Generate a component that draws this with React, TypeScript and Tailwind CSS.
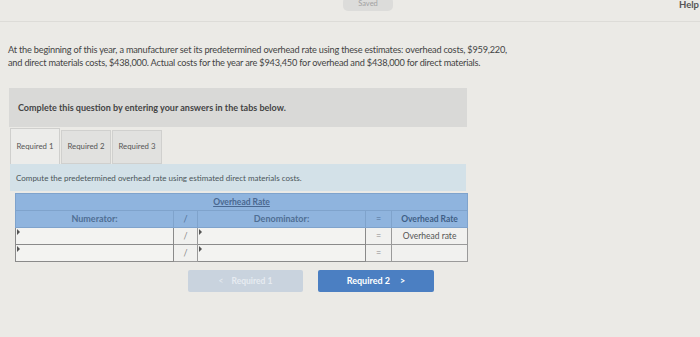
import React from 'react';

const InputCell: React.FC<{ className?: string }> = ({ className = '' }) => (
  <td className={`relative border border-[#8a8a8a] bg-[#f3f3f1] ${className}`}>
    <span className="absolute left-[1px] top-[1px] w-0 h-0 border-t-[3px] border-b-[3px] border-l-[3px] border-t-transparent border-b-transparent border-l-[#555]" />
  </td>
);

const SymCell: React.FC<{ children: React.ReactNode }> = ({ children }) => (
  <td className="border border-[#9a9a9a] bg-[#f1f1ef] text-center text-[9px] text-[#888]">{children}</td>
);

const Tab: React.FC<{ label: string; active?: boolean }> = ({ label, active }) => (
  <div
    className={
      active
        ? 'w-[50px] h-[36px] bg-[#ececea] border border-b-0 border-[#cfcfcd] flex items-center justify-center text-[7.8px] text-[#555]'
        : 'ml-[1px] w-[50px] h-[34px] bg-[#e1e1df] border border-[#d0d0ce] flex items-center justify-center text-[7.8px] text-[#555]'
    }
  >
    {label}
  </div>
);

export default function App() {
  return (
    <div className="w-[700px] h-[337px] overflow-hidden bg-[#ebeae6] font-['Lato','Liberation_Sans',sans-serif] text-[#3f3f3f]">
      <div className="relative h-[22px] border-b border-[#dddcd8]">
        <div className="absolute left-[343px] top-[-3px] w-[50px] h-[14px] rounded-[5px] bg-[#dcdcda] flex items-center justify-center text-[7.5px] leading-none text-[#a2a2a2]">Saved</div>
        <div className="absolute right-[1px] top-[0px] text-[9.5px] leading-none font-bold text-[#555]">Help</div>
      </div>

      <p className="px-[8px] pt-[21px] text-[9.2px] leading-[13px] tracking-[-0.2px] text-[#444]">
        At the beginning of this year, a manufacturer set its predetermined overhead rate using these estimates: overhead costs, $959,220,
        <br />
        and direct materials costs, $438,000. Actual costs for the year are $943,450 for overhead and $438,000 for direct materials.
      </p>

      <div className="ml-[9px] mt-[19px] w-[458px] h-[39px] bg-[#d9d9d7] flex items-center pl-[9px] text-[9px] font-bold text-[#444]">
        Complete this question by entering your answers in the tabs below.
      </div>

      <div className="ml-[10px] mt-[1px] flex items-end h-[36px]">
        <Tab label="Required 1" active />
        <Tab label="Required 2" />
        <Tab label="Required 3" />
      </div>

      <div className="ml-[10px] w-[456px] h-[27px] bg-[#d3e1e8] flex items-center pl-[6px] text-[8px] text-[#4a5558]">
        Compute the predetermined overhead rate using estimated direct materials costs.
      </div>

      <div className="ml-[15px] mt-[2px] w-[452px]">
        <table className="w-full border-collapse table-fixed">
          <colgroup>
            <col className="w-[158px]" />
            <col className="w-[24px]" />
            <col className="w-[168px]" />
            <col className="w-[26px]" />
            <col className="w-[76px]" />
          </colgroup>
          <tbody className="[&_td]:h-[17px] [&_td]:p-0">
            <tr className="bg-[#8fb4de]">
              <td colSpan={5} className="border border-[#7fa3cc] text-center text-[8.5px] font-bold text-[#4a6890]">
                <span className="underline">Overhead Rate</span>
              </td>
            </tr>
            <tr className="bg-[#8fb4de] text-[9px] font-bold text-[#4f6f94]">
              <td className="border border-[#7fa3cc] text-center">Numerator:</td>
              <td className="border border-[#7fa3cc] text-center font-normal">/</td>
              <td className="border border-[#7fa3cc] text-center">Denominator:</td>
              <td className="border border-[#7fa3cc] text-center font-normal">=</td>
              <td className="border border-[#7fa3cc] text-center text-[8.5px] text-[#3f5f86]">Overhead Rate</td>
            </tr>
            <tr>
              <InputCell />
              <SymCell>/</SymCell>
              <InputCell />
              <SymCell>=</SymCell>
              <td className="border border-[#9a9a9a] bg-[#f1f1ef] text-center text-[8.5px] text-[#555]">Overhead rate</td>
            </tr>
            <tr>
              <InputCell />
              <SymCell>/</SymCell>
              <InputCell />
              <SymCell>=</SymCell>
              <td className="border border-[#9a9a9a] bg-[#f1f1ef]" />
            </tr>
          </tbody>
        </table>
      </div>

      <div className="mt-[8px] flex">
        <div className="ml-[188px] w-[115px] h-[22px] rounded-[2px] bg-[#c9d3de] flex items-center justify-center gap-[8px] text-[8.5px] font-bold text-[#e6ebf1]">
          <span className="font-normal">&lt;</span>
          <span>Required 1</span>
        </div>
        <div className="ml-[15px] w-[116px] h-[22px] rounded-[2px] bg-[#4b7fc2] flex items-center justify-center gap-[10px] text-[9px] font-bold text-white">
          <span>Required 2</span>
          <span>&gt;</span>
        </div>
      </div>
    </div>
  );
}
